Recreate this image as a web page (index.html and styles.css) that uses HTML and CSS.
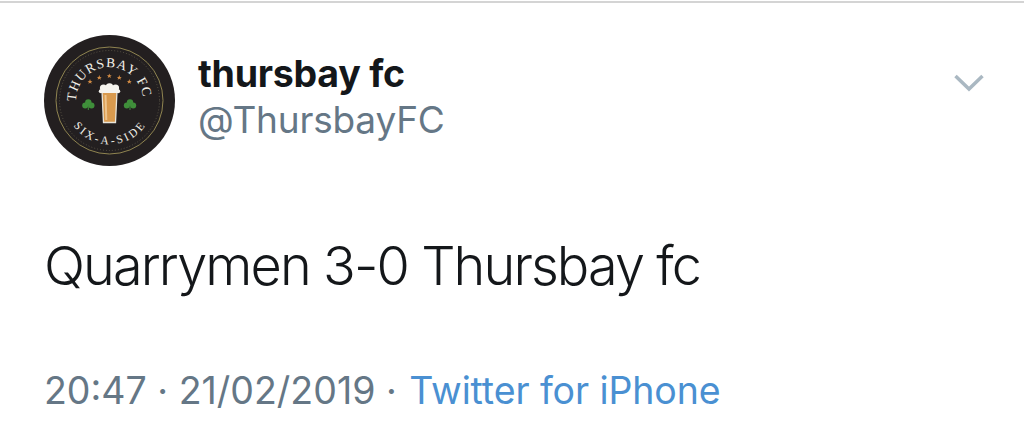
FILE: index.html
```html
<!DOCTYPE html>
<html lang="en">
<head>
<meta charset="utf-8">
<title>thursbay fc</title>
<link rel="stylesheet" href="styles.css">
</head>
<body>
<main class="tweet">
  <header class="head">
    <svg class="avatar" viewBox="0 0 132 132" width="132" height="132" aria-label="Thursbay FC logo">
      <defs>
        <path id="arcTop" d="M 32 66.500 A 33.500 33.500 0 1 1 95.900 79.700"/>
        <path id="arcBottom" d="M 29.500 90.700 A 44 44 0 0 0 101.500 90.700"/>
        <path id="star" d="M0 -2.600 L.7 -.8 L2.500 -.8 L1.100 .3 L1.600 2.100 L0 1 L-1.600 2.100 L-1.100 .3 L-2.500 -.8 L-.7 -.8 Z"/>
      </defs>
      <circle cx="65.500" cy="65.500" r="65.500" fill="#231f20"/>
      <circle cx="65.500" cy="65.500" r="53.500" fill="none" stroke="#8f8450" stroke-width="1"/>
      <circle cx="65.500" cy="65.500" r="50" fill="none" stroke="#77705a" stroke-width=".6" stroke-dasharray="1 2"/>
      <text class="logo-top"><textPath href="#arcTop" startOffset="0">THURSBAY FC</textPath></text>
      <text class="logo-bottom"><textPath href="#arcBottom" startOffset="0">SIX-A-SIDE</textPath></text>
      <g class="stars">
        <use href="#star" x="46" y="46.700"/><use href="#star" x="55.300" y="42.700"/><use href="#star" x="65.300" y="41"/><use href="#star" x="75.300" y="42.700"/><use href="#star" x="85.300" y="46.700"/>
      </g>
      <g class="clover">
        <circle cx="44.300" cy="67.500" r="3.200"/><circle cx="41.200" cy="70.500" r="3"/><circle cx="47.500" cy="70.500" r="3"/><path class="stem" d="M44.300 70v5"/>
        <circle cx="86" cy="67.500" r="3.200"/><circle cx="82.800" cy="70.500" r="3"/><circle cx="89.200" cy="70.500" r="3"/><path class="stem" d="M86 70v5"/>
      </g>
      <path d="M58 58 H73 L71.500 87 H59.500 Z" fill="#d99a4e"/>
      <path class="shine" d="M61.500 60 L62.300 85"/>
      <path class="rim" d="M58 56 L59.500 87.500 H71.500 L73 56"/>
      <g fill="#f6f4ef">
        <circle cx="59.500" cy="53" r="3.600"/><circle cx="65.500" cy="52" r="3.800"/><circle cx="71.500" cy="53" r="3.600"/><circle cx="56.800" cy="56.300" r="2"/><circle cx="74.200" cy="56.300" r="2"/><rect x="57" y="53" width="17" height="5"/>
      </g>
    </svg>
    <div class="names">
      <div class="name">thursbay fc</div>
      <div class="handle">@ThursbayFC</div>
    </div>
    <svg class="chevron" viewBox="0 0 32 20" width="32" height="20" aria-hidden="true"><path d="M2.500 3 L16 16 L29.500 3"/></svg>
  </header>
  <p class="body">Quarrymen 3-0 Thursbay fc</p>
  <p class="meta">20:47 · 21/02/2019 · <span class="source">Twitter for iPhone</span></p>
</main>
</body>
</html>
```
FILE: styles.css
```css
* { box-sizing: border-box; }
html, body { margin: 0; padding: 0; background: #fff; }
body { font-family: Inter, "Liberation Sans", sans-serif; height: 446px; overflow: hidden; padding-top: 1px; }
.tweet { border-top: 2px solid #d4d4d4; padding: 32px 38px 0 44px; }
.head { display: flex; align-items: flex-start; }
.avatar { flex: none; display: block; }
.names { flex: 1; margin-left: 22px; padding-top: 17px; }
.name { font-size: 37.500px; line-height: 44px; font-weight: 700; color: #14171a; letter-spacing: -0.25px; }
.handle { font-size: 37px; line-height: 48px; color: #657786; letter-spacing: -0.2px; }
.chevron { flex: none; margin-top: 38px; margin-left: -1px; margin-right: 1px; fill: none; stroke: #aab8c2; stroke-width: 3.500; }
.body { margin: 67px 0 0; font-size: 54px; line-height: 64px; color: #14171a; letter-spacing: -1.900px; font-weight: 350; }
.meta { margin: 70px 0 0; font-size: 37.500px; line-height: 46px; color: #657786; letter-spacing: 0; }
.source { color: #4a90d2; margin-left: 2px; letter-spacing: -0.1px; }
.logo-top { font-family: "Liberation Serif", serif; font-size: 13.500px; fill: #f1efe8; letter-spacing: 1.100px; }
.logo-bottom { font-family: "Liberation Serif", serif; font-size: 11.500px; fill: #f1efe8; letter-spacing: 2.600px; }
.stars { fill: #d08a44; }
.clover { fill: #3f8f3a; }
.stem { stroke: #3f8f3a; stroke-width: 1; }
.shine { stroke: #eec48c; stroke-width: 2; fill: none; }
.rim { stroke: #e8e4da; stroke-width: 1.300; fill: none; }
```
